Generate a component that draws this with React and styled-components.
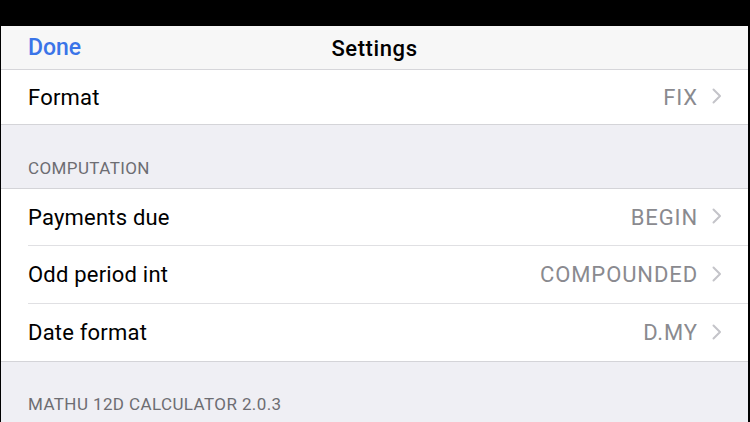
import React from 'react'
import styled, { createGlobalStyle } from 'styled-components'

const GlobalStyle = createGlobalStyle`
  *, *::before, *::after {
    box-sizing: border-box;
  }
  html, body {
    margin: 0;
    padding: 0;
    background: #000;
  }
  body {
    font-family: Roboto, "Liberation Sans", sans-serif;
    -webkit-font-smoothing: antialiased;
  }
`

const Screen = styled.div`
  width: 750px;
  height: 422px;
  overflow: hidden;
  display: flex;
  flex-direction: column;
  background: #000;
`

const StatusBar = styled.div`
  height: 26px;
  flex-shrink: 0;
  background: #000;
`

const Page = styled.div`
  flex: 1;
  margin: 0 2px 0 1px;
  background: #efeff4;
  display: flex;
  flex-direction: column;
`

const NavBar = styled.div`
  height: 44px;
  flex-shrink: 0;
  background: #f7f7f7;
  border-bottom: 1px solid #d6d6da;
  display: grid;
  grid-template-columns: 1fr auto 1fr;
  align-items: center;
  padding: 0 27px;
`

const NavButton = styled.span`
  color: #3a74e8;
  font-size: 23px;
  font-weight: 500;
  margin-top: -1px;
`

const NavTitle = styled.span`
  color: #000;
  font-size: 22px;
  font-weight: 500;
  letter-spacing: 0.6px;
  margin-top: 1px;
`

const Group = styled.div`
  background: #fff;
  border-bottom: 1px solid #d4d4d8;
  border-top: ${p => (p.$top ? '1px solid #d4d4d8' : 'none')};
`

const Row = styled.div`
  height: ${p => p.$h}px;
  display: flex;
  align-items: center;
  margin-left: 27px;
  padding-right: 26px;
  border-top: ${p => (p.$divided ? '1px solid #e0e0e3' : 'none')};
`

const Label = styled.span`
  flex: 1;
  color: #000;
  font-size: 22px;
  letter-spacing: 0.2px;
`

const Value = styled.span`
  color: #8a8a8f;
  font-size: 22px;
  letter-spacing: 0.9px;
`

const Chevron = styled.svg`
  width: 10px;
  height: 16px;
  margin-left: 14px;
  margin-top: -2px;
`

const SectionHeader = styled.div`
  height: ${p => p.$h}px;
  flex-shrink: 0;
  display: flex;
  align-items: flex-end;
  padding: 0 0 ${p => p.$pb}px 27px;
  color: #6d6d72;
  font-size: 17px;
  letter-spacing: 0.4px;
`

function Disclosure() {
  return (
    <Chevron viewBox="0 0 10 16">
      <path d="M1.5 1.5 L8 8 L1.5 14.5" fill="none" stroke="#c4c4c9" strokeWidth="2" strokeLinecap="round" strokeLinejoin="round" />
    </Chevron>
  )
}

const computation = [
  { label: 'Payments due', value: 'BEGIN', h: 56 },
  { label: 'Odd period int', value: 'COMPOUNDED', h: 58 },
  { label: 'Date format', value: 'D.MY', h: 58 },
]

export default function App() {
  return (
    <Screen>
      <GlobalStyle />
      <StatusBar />
      <Page>
        <NavBar>
          <NavButton>Done</NavButton>
          <NavTitle>Settings</NavTitle>
          <span />
        </NavBar>
        <Group>
          <Row $h={54}>
            <Label>Format</Label>
            <Value>FIX</Value>
            <Disclosure />
          </Row>
        </Group>
        <SectionHeader $h={63} $pb={10}>COMPUTATION</SectionHeader>
        <Group $top>
          {computation.map((item, i) => (
            <Row key={item.label} $h={item.h} $divided={i > 0}>
              <Label>{item.label}</Label>
              <Value>{item.value}</Value>
              <Disclosure />
            </Row>
          ))}
        </Group>
        <SectionHeader $h={56} $pb={4}>MATHU 12D CALCULATOR 2.0.3</SectionHeader>
      </Page>
    </Screen>
  )
}
